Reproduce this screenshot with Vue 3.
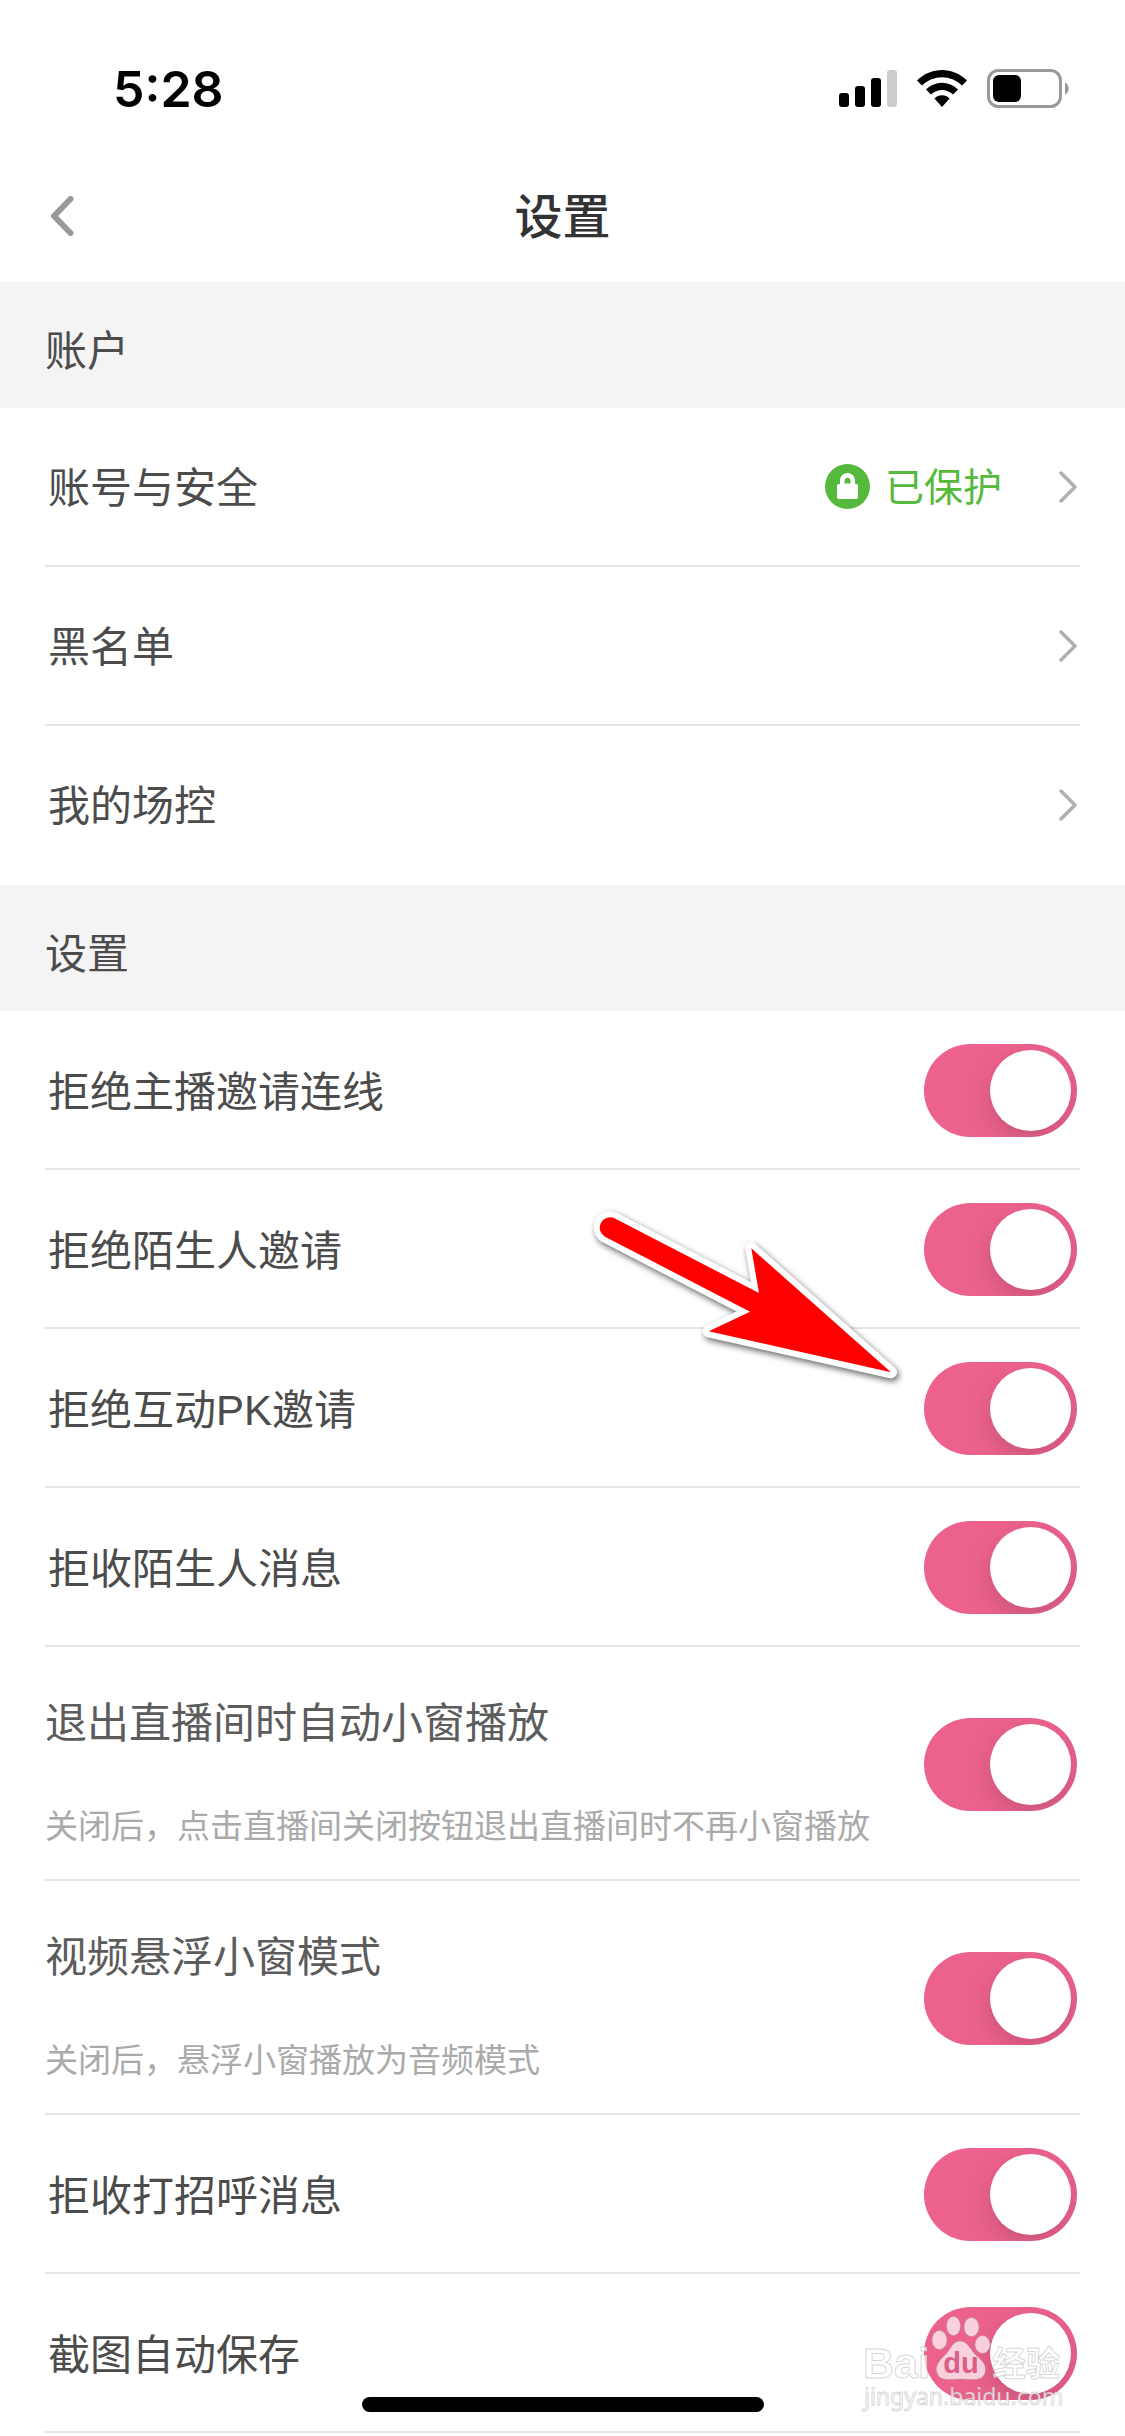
<script setup>
import { ref } from 'vue'

//账户相关入口
const links = [
    { id: 'security', text: '账号与安全', status: '已保护' },
    { id: 'blacklist', text: '黑名单' },
    { id: 'manager', text: '我的场控' },
]

//开关列表 desc 为开关下方的说明文字
const switches = ref([
    { id: 'link', text: '拒绝主播邀请连线', on: true },
    { id: 'stranger', text: '拒绝陌生人邀请', on: true },
    { id: 'pk', text: '拒绝互动PK邀请', on: true },
    { id: 'message', text: '拒收陌生人消息', on: true },
    { id: 'exit', text: '退出直播间时自动小窗播放', desc: '关闭后，点击直播间关闭按钮退出直播间时不再小窗播放', on: true },
    { id: 'float', text: '视频悬浮小窗模式', desc: '关闭后，悬浮小窗播放为音频模式', on: true },
    { id: 'greet', text: '拒收打招呼消息', on: true },
    { id: 'capture', text: '截图自动保存', on: true },
])
</script>

<template>
    <div class="page">
        <div class="status-bar">
            <span class="time">5:28</span>
            <div class="status-icons">
                <svg width="58" height="40" viewBox="0 0 58 40">
                    <rect x="0" y="24" width="10" height="14" rx="3" />
                    <rect x="16" y="17" width="10" height="21" rx="3" />
                    <rect x="32" y="9" width="10" height="29" rx="3" />
                    <rect x="48" y="1" width="10" height="37" rx="3" fill="#ccc" />
                </svg>
                <svg width="50" height="40" viewBox="0 0 50 40">
                    <path d="M0 11.5C14 -2.5 36 -2.5 50 11.5L45 16.5C33.5 5.5 16.5 5.5 5 16.5Z" />
                    <path d="M9 20.5C18 11.5 32 11.5 41 20.5L36 25.5C29.5 19.5 20.5 19.5 14 25.5Z" />
                    <path d="M17.5 29.5C21.5 25.3 28.5 25.3 32.5 29.5L25 38Z" />
                </svg>
                <svg width="82" height="40" viewBox="0 0 82 40">
                    <rect x="1.5" y="1.5" width="72" height="36" rx="10" fill="none" stroke="#999" stroke-width="3" />
                    <rect x="6" y="6" width="28" height="27" rx="6" />
                    <path d="M78 13.5C83 15.5 83 23.5 78 25.5Z" fill="#999" />
                </svg>
            </div>
        </div>

        <header class="nav">
            <button class="back" type="button" aria-label="返回">
                <svg width="24" height="42" viewBox="0 0 24 42">
                    <path d="M20.5 3L4 20L20.5 37" fill="none" stroke="#999" stroke-width="6" stroke-linecap="round"
                        stroke-linejoin="round" />
                </svg>
            </button>
            <h1>设置</h1>
        </header>

        <h2 class="group-title">账户</h2>
        <ul class="list">
            <li v-for="item in links" :key="item.id">
                <a class="row" href="#">
                    <span class="text">{{ item.text }}</span>
                    <span v-if="item.status" class="status">
                        <svg width="45" height="45" viewBox="0 0 45 45">
                            <circle cx="22.5" cy="22.5" r="22.5" fill="#55b93c" />
                            <path d="M15 20V17C15 6.300 30 6.300 30 17V20H31Q33 20 33 22V33Q33 35 31 35H14Q12 35 12 33V22Q12 20 14 20Z"
                                fill="#fff" />
                            <path d="M19.5 19.5V17C19.5 12.5 25.5 12.5 25.5 17V19.5Z" fill="#55b93c" />
                        </svg>
                        <span class="status-text">{{ item.status }}</span>
                    </span>
                    <svg class="arrow" width="18" height="32" viewBox="0 0 18 32">
                        <path d="M2 2L16 16L2 30" fill="none" stroke="#b0b0b0" stroke-width="3.5"
                            stroke-linecap="round" stroke-linejoin="round" />
                    </svg>
                </a>
            </li>
        </ul>

        <h2 class="group-title">设置</h2>
        <ul class="list switch-list">
            <li v-for="item in switches" :key="item.id">
                <div class="row" :class="{ 'has-desc': item.desc }">
                    <div class="content">
                        <label class="text" :for="item.id">{{ item.text }}</label>
                        <p v-if="item.desc" class="desc">{{ item.desc }}</p>
                    </div>
                    <input :id="item.id" v-model="item.on" class="switch" type="checkbox" />
                </div>
                <!-- 指向PK开关的箭头 -->
                <svg v-if="item.id === 'pk'" class="pointer" width="320" height="180" viewBox="0 0 320 180">
                    <path d="M30 18L175 93L167.3 48.3L307 172.3L124.7 131.3L166 111.7L21 36.7A10.4 10.4 0 0 1 30 18Z"
                        fill="#f00" stroke="#fff" stroke-width="12" stroke-linejoin="round" paint-order="stroke" />
                </svg>
            </li>
        </ul>

        <svg class="watermark" width="210" height="106" viewBox="0 0 210 106">
            <g fill="#fff" stroke="#999" stroke-opacity=".4" stroke-width="1">
                <text class="brand" x="2" y="67">Bai</text>
                <g fill-opacity=".7">
                    <ellipse cx="78.5" cy="29" rx="7.5" ry="9.5" />
                    <ellipse cx="92.5" cy="15" rx="7" ry="9.5" />
                    <ellipse cx="110.5" cy="16" rx="7.5" ry="9.5" />
                    <ellipse cx="121.5" cy="33.5" rx="7.5" ry="9" />
                    <path d="M99 30C107 30 109 39 116 45C123 51 126 56 124 62C121 71 110 68 100 68C90 68 79 71 76 62C74 56 77 51 83 45C90 39 91 30 99 30Z" />
                </g>
                <text class="brand-cn" x="131" y="65">经验</text>
                <text class="site" x="3" y="94">jingyan.baidu.com</text>
            </g>
            <text class="brand-du" x="100" y="62">du</text>
        </svg>
        <div class="home-bar"></div>
    </div>
</template>

<style>
body {
    margin: 0;
    background-color: #fff;
}
</style>

<style scoped>
.page {
    position: relative;
    min-height: 100vh;
    background-color: #fff;
    color: #4c4c4c;
    font-family: "Liberation Sans", "Noto Sans CJK SC", sans-serif;
}

.page svg {
    display: block;
    flex: none;
}

.status-bar {
    box-sizing: border-box;
    display: flex;
    align-items: center;
    justify-content: space-between;
    height: 151px;
    padding: 27px 56px 0 113px;
    color: #000;
}

.time {
    font-family: Inter, sans-serif;
    font-size: 50px;
    font-weight: 600;
    line-height: 60px;
}

.status-icons {
    display: flex;
    gap: 20px;
}

.nav {
    display: grid;
    grid-template-columns: 120px 1fr 120px;
    align-items: center;
    height: 131px;
}

.back {
    justify-self: start;
    margin: 0;
    padding: 24px 50px;
    border: 0;
    background: none;
    cursor: pointer;
}

h1 {
    margin: 0;
    padding-top: 2px;
    color: #333;
    font-size: 48px;
    font-weight: 500;
    line-height: 60px;
    text-align: center;
}

.group-title {
    margin: 0;
    padding: 40px 45px 26px;
    background-color: #f4f4f4;
    font-size: 42px;
    font-weight: 400;
    line-height: 60px;
}

.list {
    margin: 0;
    padding: 0 45px;
    list-style: none;
}

.list li {
    position: relative;
    border-bottom: 2px solid #e4e4e4;
}

.list:not(.switch-list) li:last-child {
    border-bottom-color: transparent;
}

.row {
    box-sizing: border-box;
    display: flex;
    align-items: center;
    min-height: 157px;
    padding: 0 3px;
    color: inherit;
    text-decoration: none;
}

.switch-list .row {
    padding-top: 2px;
}

.text {
    display: block;
    padding-top: 4px;
    font-size: 42px;
    line-height: 60px;
}

.status {
    display: flex;
    align-items: center;
    gap: 15px;
    margin-left: auto;
    color: #55b93c;
    font-size: 39px;
    line-height: 60px;
}

.status-text {
    padding-top: 2px;
}

.arrow {
    margin-left: auto;
}

.status+.arrow {
    margin-left: 57px;
}

.content {
    flex: 1;
}

.switch-list .has-desc {
    min-height: 232px;
    padding-left: 0;
    color: #5c5c5c;
}

.has-desc .content {
    padding-top: 18px;
}

.desc {
    margin: 43px 0 0;
    color: #aaa;
    font-size: 33px;
    line-height: 60px;
}

.switch {
    appearance: none;
    flex: none;
    width: 153px;
    height: 93px;
    margin: 0;
    overflow: hidden;
    border-radius: 47px;
    background-color: #ddd;
    cursor: pointer;
}

.switch::before {
    content: "";
    display: block;
    width: 81px;
    height: 81px;
    margin: 6px;
    border-radius: 50%;
    background-color: #fff;
    box-shadow: 0 9px 24px rgba(0, 0, 0, .15);
    transition: .3s;
}

.switch:checked {
    background-color: #ec628c;
}

.switch:checked::before {
    margin-left: 66px;
}

/* 箭头盖在列表上面 */
.pointer {
    position: absolute;
    top: -129px;
    right: 176px;
    overflow: visible;
    filter: drop-shadow(2px 3px 3px rgba(0, 0, 0, .6));
    pointer-events: none;
}

.watermark {
    position: absolute;
    right: 54px;
    bottom: 19px;
    pointer-events: none;
}

.brand {
    font-size: 43px;
    font-weight: 700;
    fill-opacity: .7;
}

.brand-cn {
    font-size: 34px;
    font-weight: 700;
    fill-opacity: .7;
}

.brand-du {
    font-size: 29px;
    font-weight: 700;
    fill: #dc5f86;
    text-anchor: middle;
}

.site {
    font-family: "Noto Sans", sans-serif;
    font-size: 23px;
    fill-opacity: .8;
}

.home-bar {
    position: absolute;
    bottom: 24px;
    left: 50%;
    width: 402px;
    height: 15px;
    border-radius: 8px;
    background-color: #000;
    transform: translateX(-50%);
}
</style>
